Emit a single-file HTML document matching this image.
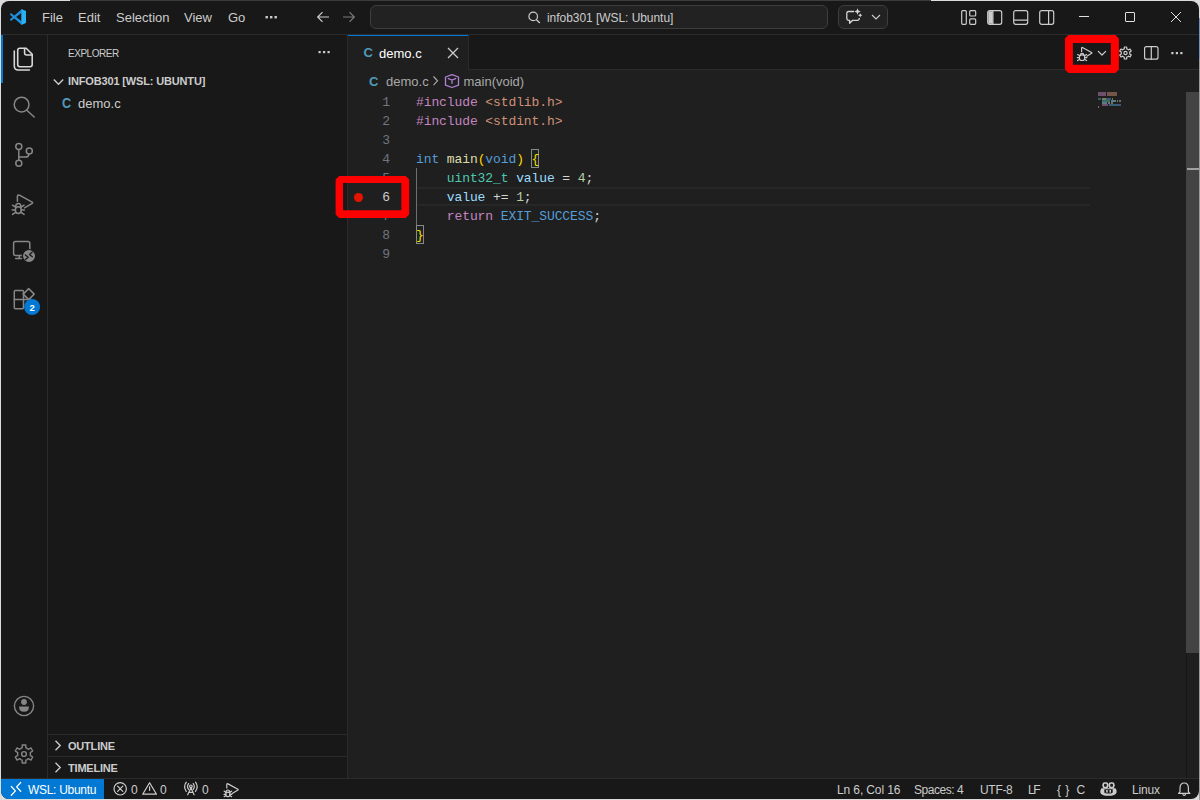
<!DOCTYPE html>
<html><head><meta charset="utf-8">
<style>
*{margin:0;padding:0;box-sizing:border-box}
html,body{width:1200px;height:800px;overflow:hidden;background:#dcdcdc}
body{position:relative;font-family:"Liberation Sans",sans-serif;color:#ccc}
.a{position:absolute}
#win{position:absolute;left:0;top:0;width:1200px;height:800px;background:#181818;clip-path:inset(1px 1px 1px 1px round 8px)}
.t{position:absolute;white-space:pre;line-height:1}
svg{position:absolute;overflow:visible}
.code{position:absolute;left:416px;margin-top:1px;font-family:"Liberation Mono",monospace;font-size:13px;letter-spacing:-0.1px;line-height:19px;white-space:pre;color:#d4d4d4}
.ln{position:absolute;left:359px;margin-top:1px;width:31px;text-align:right;font-family:"Liberation Mono",monospace;font-size:13px;line-height:19px;color:#6e7681}
.kw{color:#c586c0}.str{color:#ce9178}.ty{color:#569cd6}.fn{color:#dcdcaa}.br{color:#ffd700}.tp{color:#4ec9b0}.var{color:#9cdcfe}.num{color:#b5cea8}
</style></head><body>
<div class="a" style="left:70px;top:0;width:861px;height:1px;background:#3c3c3c"></div><div class="a" style="left:1199px;top:18px;width:1px;height:40px;background:#7090c0"></div><div class="a" style="left:1199px;top:58px;width:1px;height:742px;background:#9a9a9a"></div>
<div id="win">
  <!-- ============ title bar ============ -->
  <div class="a" style="left:0;top:34px;width:1200px;height:1px;background:#2b2b2b"></div>
  <!-- vscode logo -->
  <svg style="left:0;top:0" width="40" height="35" viewBox="0 0 40 35">
    <path d="M21.6 9.2L10.9 18.6L9.8 19.8L11 21L12.2 20.1L21.6 12.8Z" fill="#1c90dc"/>
    <path d="M21.6 24.8L10.9 15.4L9.8 14.2L11 13L12.2 13.9L21.6 21.2Z" fill="#1c90dc"/>
    <path d="M21.3 9L26 11V23L21.3 25Z" fill="#2ab0f5"/>
  </svg>
  <div class="t" style="left:42px;top:11px;font-size:13px;color:#cccccc">File</div>
  <div class="t" style="left:78px;top:11px;font-size:13px;color:#cccccc">Edit</div>
  <div class="t" style="left:116px;top:11px;font-size:13px;color:#cccccc">Selection</div>
  <div class="t" style="left:184px;top:11px;font-size:13px;color:#cccccc">View</div>
  <div class="t" style="left:228px;top:11px;font-size:13px;color:#cccccc">Go</div>
  <svg style="left:265px;top:16px" width="13" height="3"><rect x="0.5" y="0" width="2.4" height="2.4" fill="#ccc"/><rect x="5" y="0" width="2.4" height="2.4" fill="#ccc"/><rect x="9.5" y="0" width="2.4" height="2.4" fill="#ccc"/></svg>
  <!-- nav arrows -->
  <svg style="left:316px;top:10px" width="14" height="14" viewBox="0 0 14 14"><path d="M13 7H1.8M6.5 2.2L1.7 7l4.8 4.8" stroke="#cccccc" stroke-width="1.2" fill="none"/></svg>
  <svg style="left:342px;top:10px" width="14" height="14" viewBox="0 0 14 14"><path d="M1 7h11.2M7.5 2.2L12.3 7l-4.8 4.8" stroke="#7a7a7a" stroke-width="1.2" fill="none"/></svg>
  <!-- command center -->
  <div class="a" style="left:370px;top:5px;width:458px;height:24px;background:#222222;border:1px solid #3e3e3e;border-radius:6px"></div>
  <svg style="left:528px;top:11px" width="13" height="13" viewBox="0 0 13 13"><circle cx="5.2" cy="5.4" r="4.3" stroke="#cccccc" stroke-width="1.2" fill="none"/><path d="M8.3 8.5L11.8 12" stroke="#cccccc" stroke-width="1.3"/></svg>
  <div class="t" style="left:547px;top:11.5px;font-size:12px;color:#cccccc;letter-spacing:-0.05px">infob301 [WSL: Ubuntu]</div>
  <!-- copilot button -->
  <div class="a" style="left:838px;top:5px;width:50px;height:24px;background:#222222;border:1px solid #3e3e3e;border-radius:6px"></div>
  <svg style="left:0;top:0" width="900" height="35" viewBox="0 0 900 35">
    <path d="M854 11.5H848.6Q846.8 11.5 846.8 13.3V18.5Q846.8 20.3 848.6 20.3H849.6V23.3L852.7 20.3H857.5Q859.3 20.3 859.3 18.5V18" stroke="#d4d4d4" stroke-width="1.3" fill="none" stroke-linejoin="round"/>
    <path d="M857.5 8.2L858.4 10.6L860.8 11.5L858.4 12.4L857.5 14.8L856.6 12.4L854.2 11.5L856.6 10.6Z" fill="#d4d4d4"/>
    <path d="M860.2 13.200000000000001L860.9000000000001 14.600000000000001L862.3000000000001 15.3L860.9000000000001 16.0L860.2 17.400000000000002L859.5 16.0L858.1 15.3L859.5 14.600000000000001Z" fill="#d4d4d4"/>
  </svg>
  <svg style="left:871px;top:14px" width="10" height="6" viewBox="0 0 10 6"><path d="M1 1l4 4 4-4" stroke="#cccccc" stroke-width="1.1" fill="none"/></svg>
  <!-- layout icons -->
  <svg style="left:961px;top:10px" width="16" height="15" viewBox="0 0 16 15"><rect x="0.7" y="0.7" width="4.6" height="13.6" rx="1" stroke="#cccccc" stroke-width="1.2" fill="none"/><rect x="8.7" y="0.7" width="6" height="5.3" rx="1" stroke="#cccccc" stroke-width="1.2" fill="none"/><rect x="8.7" y="8.9" width="6" height="5.4" rx="1" stroke="#cccccc" stroke-width="1.2" fill="none"/></svg>
  <svg style="left:987px;top:10px" width="16" height="15" viewBox="0 0 16 15"><rect x="0.7" y="0.7" width="14" height="13.6" rx="2" stroke="#cccccc" stroke-width="1.2" fill="none"/><path d="M1.3 1.3h4.4v12.4H1.3z" fill="#cccccc"/><path d="M5.9 0.7v13.6" stroke="#cccccc" stroke-width="1.2"/></svg>
  <svg style="left:1013px;top:10px" width="16" height="15" viewBox="0 0 16 15"><rect x="0.7" y="0.7" width="14" height="13.6" rx="2" stroke="#cccccc" stroke-width="1.2" fill="none"/><path d="M0.7 10.1h14" stroke="#cccccc" stroke-width="1.2"/></svg>
  <svg style="left:1039px;top:10px" width="16" height="15" viewBox="0 0 16 15"><rect x="0.7" y="0.7" width="14" height="13.6" rx="2" stroke="#cccccc" stroke-width="1.2" fill="none"/><path d="M9.6 0.7v13.6" stroke="#cccccc" stroke-width="1.2"/></svg>
  <!-- window controls -->
  <div class="a" style="left:1079px;top:16px;width:10px;height:1px;background:#e0e0e0"></div>
  <div class="a" style="left:1125px;top:12px;width:10px;height:10px;border:1px solid #e0e0e0;border-radius:1px"></div>
  <svg style="left:1170px;top:11px" width="12" height="12" viewBox="0 0 12 12"><path d="M1 1l10 10M11 1L1 11" stroke="#e0e0e0" stroke-width="1"/></svg>

  <!-- ============ activity bar ============ -->
  <div class="a" style="left:47px;top:35px;width:1px;height:743px;background:#2b2b2b"></div>
  <div class="a" style="left:1px;top:35px;width:2px;height:48px;background:#0078d4"></div>
  <svg style="left:0;top:0" width="48" height="800" viewBox="0 0 48 800">
  <g fill="none" stroke-linecap="round" stroke-linejoin="round">
  <!-- files (active) -->
  <g stroke="#d7d7d7" stroke-width="1.6">
    <path d="M19.8 48.2H26.2L32.2 54.2V64.6Q32.2 66.7 30.1 66.7H19.8Q17.7 66.7 17.7 64.6V50.3Q17.7 48.2 19.8 48.2Z"/>
    <path d="M24.6 48.6V53Q24.6 55 26.6 55H31.8"/>
    <path d="M14.3 51V66Q14.3 70 18.3 70H29.4"/>
  </g>
  <g stroke="#868686" stroke-width="1.5">
  <!-- search -->
    <circle cx="21.6" cy="104.6" r="7.4"/>
    <path d="M26.8 110.2L34.2 117"/>
  <!-- scm -->
    <circle cx="18.8" cy="146.4" r="3"/>
    <circle cx="29.3" cy="151.1" r="3"/>
    <circle cx="18.8" cy="163.2" r="3"/>
    <path d="M18.8 149.4V160.2"/>
    <path d="M18.8 157.1H25.5Q28.6 157.1 29 154.1"/>
  <!-- debug -->
    <path d="M17.4 201.2V196.4Q17.4 194.3 19.4 195.2L32.2 202.2Q33 202.8 32.2 203.4L24.6 207.8"/>
    <path d="M15.6 206.8Q15.8 203.6 18.3 203.6Q20.8 203.6 21 206.8"/>
    <rect x="15.4" y="206.8" width="5.8" height="6.6" rx="2.9"/>
    <path d="M12.5 205.2L15.4 207M24.1 205.2L21.2 207M12.2 210.1H15.4M24.4 210.1H21.2M12.5 214.4L15.6 212.3M24.1 214.4L21 212.3"/>
  <!-- remote -->
    <path d="M29.8 250.5V243.6Q29.8 241.6 27.8 241.6H15.6Q13.6 241.6 13.6 243.6V253.5Q13.6 255.5 15.6 255.5H21.8"/>
    <path d="M15.6 258.5H21.6M19.3 255.5V258.5"/>
  </g>
  <circle cx="29" cy="256.1" r="6.6" fill="#868686" stroke="#181818" stroke-width="1.2"/>
  <path d="M25.4 255L28.2 257.3L25.4 259.6M32.3 252.1L29.5 254.4L32.3 256.7" stroke="#181818" stroke-width="1.3"/>
  <!-- extensions -->
  <g stroke="#868686" stroke-width="1.5">
    <path d="M14.3 291.5Q14.3 290.5 15.3 290.5H22.5Q23.5 290.5 23.5 291.5V307.8Q23.5 308.8 22.5 308.8H15.3Q14.3 308.8 14.3 307.8Z"/>
    <path d="M14.3 299.6H31"/>
    <path d="M23.2 294.1L28.7 288.6L34.2 294.1L28.7 299.6Z"/>
  </g>
  <circle cx="32.1" cy="307" r="8" fill="#0078d4"/>
  <!-- accounts -->
  <g stroke="#868686" stroke-width="1.4">
    <circle cx="24" cy="706" r="9.6"/>
  </g>
  <circle cx="24" cy="702" r="2.9" fill="#868686"/>
  <path d="M19.1 706.5H28.9Q29.2 711.8 24 711.8Q18.8 711.8 19.1 706.5Z" fill="#868686"/>
  <!-- gear -->
  <path stroke="#868686" stroke-width="1.4" d="M20.80 748.46 L22.13 747.88 L22.24 744.97 L25.76 744.97 L25.87 747.88 L27.20 748.46 L28.36 749.32 L30.94 747.96 L32.70 751.00 L30.24 752.56 L30.40 754.00 L30.24 755.44 L32.70 757.00 L30.94 760.04 L28.36 758.68 L27.20 759.54 L25.87 760.12 L25.76 763.03 L22.24 763.03 L22.13 760.12 L20.80 759.54 L19.64 758.68 L17.06 760.04 L15.30 757.00 L17.76 755.44 L17.60 754.00 L17.76 752.56 L15.30 751.00 L17.06 747.96 L19.64 749.32Z"/>
  <circle cx="24" cy="754" r="2.4" stroke="#868686" stroke-width="1.4"/>
  </g>
</svg>
<div class="t" style="left:29.5px;top:303.2px;font-size:9.5px;font-weight:bold;color:#ffffff">2</div>

  <!-- ============ sidebar ============ -->
  <div class="a" style="left:347px;top:35px;width:1px;height:743px;background:#2b2b2b"></div>
  <div class="t" style="left:68px;top:48.5px;font-size:10px;color:#cccccc;letter-spacing:-0.47px">EXPLORER</div>
  <svg style="left:318px;top:51px" width="13" height="3"><rect x="0.5" y="0" width="2.2" height="2.2" fill="#ccc"/><rect x="5" y="0" width="2.2" height="2.2" fill="#ccc"/><rect x="9.5" y="0" width="2.2" height="2.2" fill="#ccc"/></svg>
  <svg style="left:53px;top:77.5px" width="11" height="8" viewBox="0 0 11 8"><path d="M0.8 1.5l4.7 4.7 4.7-4.7" stroke="#cccccc" stroke-width="1.35" fill="none"/></svg>
  <div class="t" style="left:68px;top:76px;font-size:11px;font-weight:bold;color:#cccccc;letter-spacing:-0.15px">INFOB301 [WSL: UBUNTU]</div>
  <div class="t" style="left:61.5px;top:96px;font-size:14px;font-weight:bold;color:#519aba;transform:scaleX(0.9);transform-origin:left">C</div>
  <div class="t" style="left:78px;top:96.5px;font-size:13px;color:#cccccc">demo.c</div>
  <div class="a" style="left:48px;top:734px;width:299px;height:1px;background:#2b2b2b"></div>
  <div class="a" style="left:48px;top:756px;width:299px;height:1px;background:#2b2b2b"></div>
  <svg style="left:54px;top:740px" width="8" height="11" viewBox="0 0 8 11"><path d="M1.5 0.8l4.7 4.7-4.7 4.7" stroke="#cccccc" stroke-width="1.35" fill="none"/></svg>
  <div class="t" style="left:68px;top:740.5px;font-size:11px;font-weight:bold;color:#cccccc;letter-spacing:-0.2px">OUTLINE</div>
  <svg style="left:54px;top:762px" width="8" height="11" viewBox="0 0 8 11"><path d="M1.5 0.8l4.7 4.7-4.7 4.7" stroke="#cccccc" stroke-width="1.35" fill="none"/></svg>
  <div class="t" style="left:68px;top:762.5px;font-size:11px;font-weight:bold;color:#cccccc;letter-spacing:-0.2px">TIMELINE</div>

  <!-- ============ editor ============ -->
  <div class="a" style="left:348px;top:70px;width:852px;height:708px;background:#1f1f1f"></div>
  <div class="a" style="left:348px;top:35px;width:120px;height:35px;background:#1f1f1f;border-top:1px solid #0078d4"></div>
  <div class="a" style="left:468px;top:35px;width:1px;height:35px;background:#2b2b2b"></div>
  <div class="a" style="left:469px;top:69px;width:731px;height:1px;background:#2b2b2b"></div>
  <div class="t" style="left:363.5px;top:46px;font-size:13px;font-weight:bold;color:#519aba">C</div>
  <div class="t" style="left:379px;top:46.5px;font-size:13px;color:#ffffff">demo.c</div>
  <svg style="left:447px;top:47px" width="12" height="12" viewBox="0 0 12 12"><path d="M1 1l10 10M11 1L1 11" stroke="#cccccc" stroke-width="1.3"/></svg>
  <!-- editor toolbar -->
  <svg style="left:0;top:0" width="1200" height="100" viewBox="0 0 1200 100">
    <g fill="none" stroke="#cccccc" stroke-width="1.2" stroke-linecap="round" stroke-linejoin="round">
      <path d="M1081.6 51.6V48.4Q1081.6 47 1082.9 47.7L1091.6 52.5Q1092.2 52.9 1091.6 53.3L1086.9 56.2"/>
      <path d="M1080.3 54.8Q1080.5 53.4 1082.1 53.4Q1083.7 53.4 1083.9 54.8"/>
      <rect x="1079.4" y="54.8" width="5.4" height="5.7" rx="2.5"/>
      <path d="M1077.6 54.6L1079.4 55.6M1086.6 54.6L1084.8 55.6M1077.3 57.6H1079.4M1086.9 57.6H1084.8M1077.6 60.6L1079.5 59.5M1086.6 60.6L1084.7 59.5"/>
      <path d="M1098.3 51.3L1102 55L1105.7 51.3"/>
      <path d="M1123.35 49.28 L1124.24 48.89 L1124.34 47.01 L1126.66 47.01 L1126.76 48.89 L1127.65 49.28 L1128.43 49.86 L1130.10 49.00 L1131.27 51.01 L1129.69 52.03 L1129.80 53.00 L1129.69 53.97 L1131.27 54.99 L1130.10 57.00 L1128.43 56.14 L1127.65 56.72 L1126.76 57.11 L1126.66 58.99 L1124.34 58.99 L1124.24 57.11 L1123.35 56.72 L1122.57 56.14 L1120.90 57.00 L1119.73 54.99 L1121.31 53.97 L1121.20 53.00 L1121.31 52.03 L1119.73 51.01 L1120.90 49.00 L1122.57 49.86Z"/>
      <circle cx="1125.5" cy="53" r="1.6"/>
      <rect x="1144.6" y="46.6" width="13.4" height="12.6" rx="2"/>
      <path d="M1151.3 46.6V59.2"/>
    </g>
    <g fill="#cccccc"><rect x="1171.3" y="52" width="2.2" height="2.2"/><rect x="1175.8" y="52" width="2.2" height="2.2"/><rect x="1180.3" y="52" width="2.2" height="2.2"/></g>
    <!-- breadcrumb icons -->
    <path d="M433.5 76.5L437.5 80.8L433.5 85.1" fill="none" stroke="#a9a9a9" stroke-width="1.2"/>
    <g fill="none" stroke="#b180d7" stroke-width="1.3" stroke-linejoin="round">
      <path d="M452 74.6L458.5 77V85.2L452 87.5L445.5 85.2V77Z"/>
      <path d="M447.8 78.4L452 80L456.2 78.4M452 80V83.8"/>
    </g>
  </svg>
  <div class="t" style="left:369px;top:74.5px;font-size:13px;font-weight:bold;color:#519aba">C</div>
  <div class="t" style="left:386px;top:75px;font-size:13px;color:#a9a9a9">demo.c</div>
  <div class="t" style="left:463.5px;top:75px;font-size:13px;color:#a9a9a9">main(void)</div>

  <!-- current line highlight -->
  <div class="a" style="left:417px;top:187px;width:673px;height:19px;border-top:2px solid #272727;border-bottom:2px solid #272727"></div>
  <!-- indent guide -->
  <div class="a" style="left:416px;top:168px;width:1px;height:57px;background:#707070"></div>
  <!-- bracket match boxes -->
  <div class="a" style="left:531px;top:149px;width:8px;height:19px;border:1px solid #888888;background:rgba(0,100,0,0.1)"></div>
  <div class="a" style="left:416px;top:225px;width:8px;height:19px;border:1px solid #888888;background:rgba(0,100,0,0.1)"></div>

  <!-- line numbers -->
  <div class="ln" style="top:92px">1</div>
  <div class="ln" style="top:111px">2</div>
  <div class="ln" style="top:130px">3</div>
  <div class="ln" style="top:149px">4</div>
  <div class="ln" style="top:168px">5</div>
  <div class="ln" style="top:187px;color:#cccccc">6</div>
  <div class="ln" style="top:206px">7</div>
  <div class="ln" style="top:225px">8</div>
  <div class="ln" style="top:244px">9</div>
  <!-- code -->
  <div class="code" style="top:92px"><span class="kw">#include</span> <span class="str">&lt;stdlib.h&gt;</span></div>
  <div class="code" style="top:111px"><span class="kw">#include</span> <span class="str">&lt;stdint.h&gt;</span></div>
  <div class="code" style="top:149px"><span class="ty">int</span> <span class="fn">main</span><span class="br">(</span><span class="ty">void</span><span class="br">)</span> <span class="br">{</span></div>
  <div class="code" style="top:168px">    <span class="tp">uint32_t</span> <span class="var">value</span> = <span class="num">4</span>;</div>
  <div class="code" style="top:187px">    <span class="var">value</span> += <span class="num">1</span>;</div>
  <div class="code" style="top:206px">    <span class="kw">return</span> <span class="ty">EXIT_SUCCESS</span>;</div>
  <div class="code" style="top:225px"><span class="br">}</span></div>

  <!-- minimap -->
  <svg style="left:0;top:0" width="1200" height="120" viewBox="0 0 1200 120">
    <g opacity="0.6" transform="translate(0 0.2) scale(1 1)">
    <rect x="1098" y="92" width="8" height="1.6" fill="#c586c0"/><rect x="1107" y="92" width="10" height="1.6" fill="#ce9178"/>
    <rect x="1098" y="94" width="8" height="1.6" fill="#c586c0"/><rect x="1107" y="94" width="10" height="1.6" fill="#ce9178"/>
    <rect x="1098" y="98" width="3" height="1.6" fill="#569cd6"/><rect x="1102" y="98" width="4" height="1.6" fill="#dcdcaa"/><rect x="1106" y="98" width="5" height="1.6" fill="#569cd6"/><rect x="1112" y="98" width="1" height="1.6" fill="#ffd700"/>
    <rect x="1102" y="100" width="8" height="1.6" fill="#4ec9b0"/><rect x="1111" y="100" width="5" height="1.6" fill="#9cdcfe"/><rect x="1117" y="100" width="1" height="1.6" fill="#d4d4d4"/><rect x="1119" y="100" width="2" height="1.6" fill="#b5cea8"/>
    <rect x="1102" y="102" width="5" height="1.6" fill="#9cdcfe"/><rect x="1108" y="102" width="2" height="1.6" fill="#d4d4d4"/><rect x="1111" y="102" width="2" height="1.6" fill="#b5cea8"/>
    <rect x="1102" y="104" width="6" height="1.6" fill="#c586c0"/><rect x="1109" y="104" width="12" height="1.6" fill="#569cd6"/>
    <rect x="1098" y="106" width="1" height="1.6" fill="#d4d4d4"/>
    </g>
  </svg>
  <!-- scrollbar -->
  <div class="a" style="left:1186px;top:653px;width:1px;height:125px;background:#171717"></div>
  <div class="a" style="left:1186px;top:92px;width:13px;height:561px;background:#434343"></div>
  <div class="a" style="left:1187px;top:168px;width:12px;height:2px;background:#a0a0a0"></div>

  <!-- annotation boxes -->
  <svg style="left:0;top:0" width="1200" height="300" viewBox="0 0 1200 300"><path fill="#ff0000" fill-rule="evenodd" d="M339.1 175.9H405.7L409.2 179.4V214.6L405.7 218.1H339.1L335.6 214.6V179.4ZM343.1 183V210.3H401.4V183ZM1068.4 34.9H1115.4L1118.9 38.4V69.6L1115.4 73.1H1068.4L1064.9 69.6V38.4ZM1072.9 43V64.7H1110.8V43Z"/></svg>
  
  <!-- breakpoint -->
  <div class="a" style="left:353.5px;top:192.5px;width:9px;height:9px;border-radius:50%;background:#e51400"></div>


  <!-- ============ status bar ============ -->
  <div class="a" style="left:0;top:778px;width:1200px;height:1px;background:#2b2b2b"></div>
  <div class="a" style="left:0;top:779px;width:104px;height:21px;background:#0078d4"></div>
  <svg style="left:0;top:0" width="1200" height="800" viewBox="0 0 1200 800">
    <g fill="none" stroke-linecap="round" stroke-linejoin="round">
      <path d="M11.3 786.5L15.4 790.9L11.3 795.2M20.7 782.5L16.6 786.9L20.7 791.2" stroke="#ffffff" stroke-width="1.3"/>
      <g stroke="#cccccc" stroke-width="1.2">
        <circle cx="120.2" cy="788.8" r="6.2"/>
        <path d="M117.6 786.2L122.8 791.4M122.8 786.2L117.6 791.4"/>
        <path d="M149.6 782.8L156.5 794.2H142.7Z"/>
        <path d="M149.6 786.8V790.3"/>
        <path d="M186.3 782.2Q183 786.8 186.3 791.4M195.5 782.2Q198.8 786.8 195.5 791.4M188.6 783.6Q186.4 786.5 188.6 789.4M193.2 783.6Q195.4 786.5 193.2 789.4"/>
        <circle cx="190.9" cy="786.3" r="1.3"/>
        <path d="M190.9 787.8L187.7 794.8M190.9 787.8L194.1 794.8M188.9 792.4H192.9"/>
        <path d="M226.8 788V784.6Q226.8 783.3 228 783.9L237.9 789.3Q238.5 789.7 237.9 790.1L232.2 793.4"/>
        <path d="M225.9 792.2Q226.1 790 227.9 790Q229.7 790 229.9 792.2"/>
        <rect x="225.8" y="792.2" width="4.2" height="4.4" rx="2.1"/>
        <path d="M224.2 791.2L225.8 792.3M231.6 791.2L230 792.3M224 794.3H225.8M231.8 794.3H230M224.2 796.7L225.9 795.6M231.6 796.7L229.9 795.6"/>
        <path d="M1180 791.8V788.2Q1180 783 1184.2 783Q1188.4 783 1188.4 788.2V791.8L1189.9 793.3H1178.5Z"/>
        <path d="M1183 794.6Q1184.2 796.2 1185.4 794.6"/>
      </g>
      <g stroke="#cccccc" stroke-width="1.7">
        <rect x="1103.2" y="783" width="4.4" height="4.6" rx="1.6"/>
        <rect x="1109.4" y="783" width="4.4" height="4.6" rx="1.6"/>
      </g>
    </g>
    <path fill="#cccccc" fill-rule="evenodd" d="M1101.5 788.2H1115.5Q1117 790 1116.6 792.4Q1115.5 795.8 1108.4 795.8Q1101.4 795.8 1100.3 792.4Q1099.9 790 1101.5 788.2ZM1104.3 789.3V792.2Q1104.3 793.5 1108.4 793.5Q1112.7 793.5 1112.7 792.2V789.3Z"/>
    <rect x="1106.2" y="790" width="1.5" height="2.6" fill="#cccccc"/>
    <rect x="1109.5" y="790" width="1.5" height="2.6" fill="#cccccc"/>
  </svg>
  <div class="t" style="left:28px;top:784px;font-size:12px;color:#ffffff;letter-spacing:-0.3px">WSL: Ubuntu</div>
  <div class="t" style="left:131px;top:784px;font-size:12px;color:#cccccc">0</div>
  <div class="t" style="left:160px;top:784px;font-size:12px;color:#cccccc">0</div>
  <div class="t" style="left:202px;top:784px;font-size:12px;color:#cccccc">0</div>
  <div class="t" style="left:837px;top:784px;font-size:12px;color:#cccccc;letter-spacing:-0.12px">Ln 6, Col 16</div>
  <div class="t" style="left:914px;top:784px;font-size:12px;color:#cccccc;letter-spacing:-0.45px">Spaces: 4</div>
  <div class="t" style="left:980px;top:784px;font-size:12px;color:#cccccc;letter-spacing:-0.3px">UTF-8</div>
  <div class="t" style="left:1028px;top:784px;font-size:12px;color:#cccccc;letter-spacing:-1.3px">LF</div>
  <div class="t" style="left:1057px;top:783.5px;font-size:12px;color:#cccccc;letter-spacing:0.4px">{ }</div>
  <div class="t" style="left:1076.5px;top:784px;font-size:12px;color:#cccccc">C</div>
  <div class="t" style="left:1132px;top:784px;font-size:12px;color:#cccccc;letter-spacing:-0.2px">Linux</div>

</div>
</body></html>
